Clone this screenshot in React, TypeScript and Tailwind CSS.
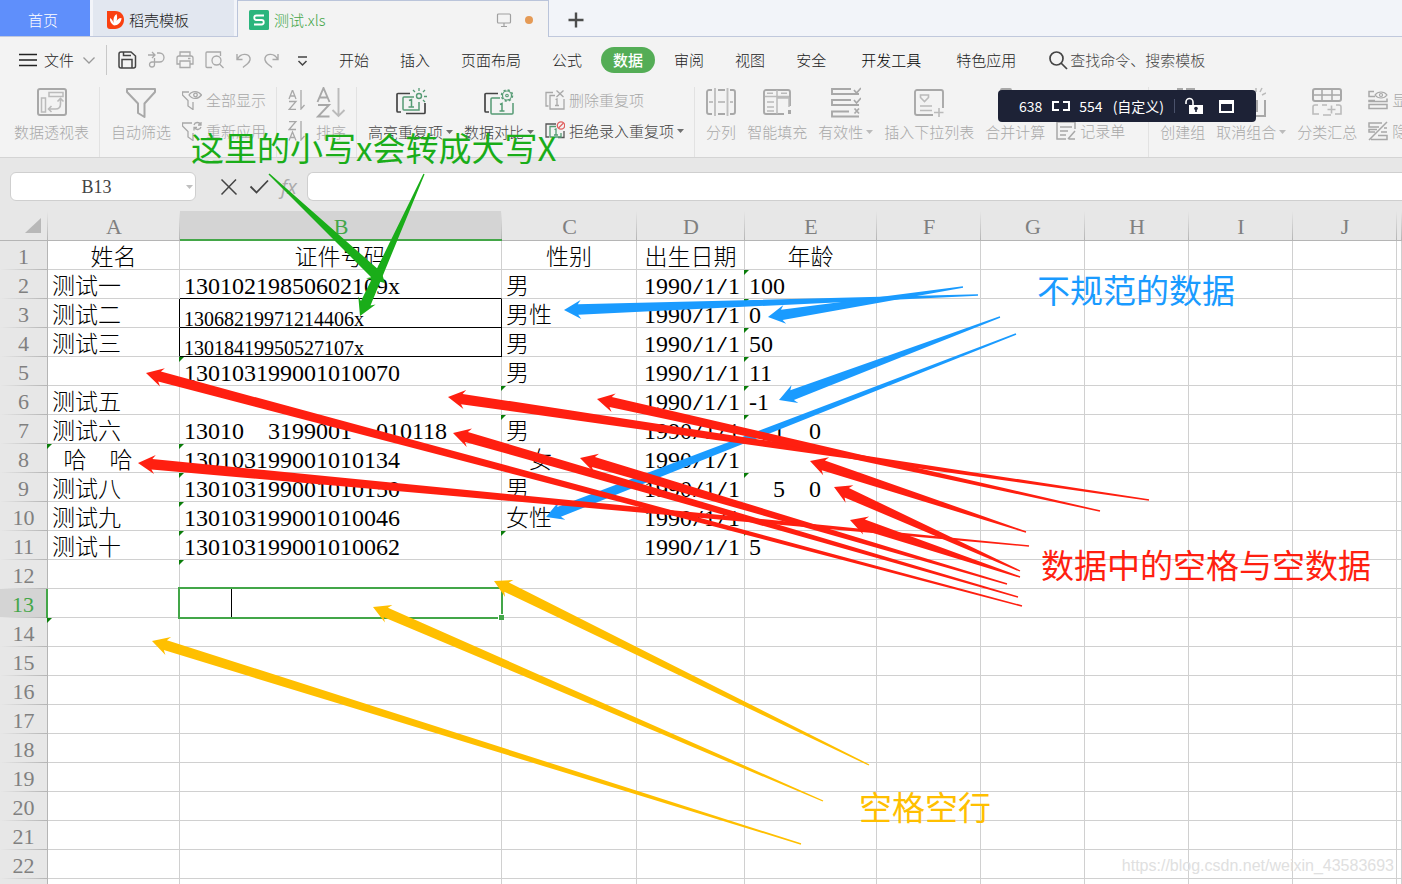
import type { ReactNode } from "react";

type Pt = [number, number];

const COLUMNS = [
  { name: "A", width: "w-[132px]" },
  { name: "B", width: "w-[322px]" },
  { name: "C", width: "w-[135px]" },
  { name: "D", width: "w-[108px]" },
  { name: "E", width: "w-[132px]" },
  { name: "F", width: "w-[104px]" },
  { name: "G", width: "w-[104px]" },
  { name: "H", width: "w-[104px]" },
  { name: "I", width: "w-[104px]" },
  { name: "J", width: "w-[104px]" },
  { name: "", width: "" },
];

/* \u2002 is an en space: half an em, the same width as one digit. */
const CELLS: Record<string, string> = {
  A1: "姓名", B1: "证件号码", C1: "性别", D1: "出生日期", E1: "年龄",
  A2: "测试一", B2: "13010219850602109x", C2: "男", D2: "1990/1/1", E2: "100",
  A3: "测试二", B3: "13068219971214406x", C3: "男性", D3: "1990/1/1", E3: "0",
  A4: "测试三", B4: "13018419950527107x", C4: "男", D4: "1990/1/1", E4: "50",
  B5: "130103199001010070", C5: "男", D5: "1990/1/1", E5: "11",
  A6: "测试五", D6: "1990/1/1", E6: "-1",
  A7: "测试六", B7: "13010\u2002\u20023199001\u2002\u2002010118", C7: "男", D7: "1990/1/1", E7: "\u2002\u20021\u2002\u20020",
  A8: "\u2002哈\u2002\u2002哈", B8: "130103199001010134", C8: "\u2002\u2002女", D8: "1990/1/1",
  A9: "测试八", B9: "130103199001010150", C9: "男", D9: "1990/1/1", E9: "\u2002\u20025\u2002\u20020",
  A10: "测试九", B10: "130103199001010046", C10: "女性", D10: "1990/1/1",
  A11: "测试十", B11: "130103199001010062", D11: "1990/1/1", E11: "5",
};

const FLAGGED = new Set([
  "A8", "A14", "B5", "B8", "B9", "B10", "B11", "B12", "C6", "C7", "C11",
  "E2", "E3", "E4", "E5", "E6", "E7", "E9", "E11",
]);
const BLACK_RIGHT = new Set(["A3", "A4", "B3", "B4"]);
const BLACK_BOTTOM = new Set(["B2", "B3", "B4"]);

const ARROWS: { color: string; from: Pt; to: Pt }[] = [
  { color: "#1aad19", from: [269, 174], to: [385, 283] },
  { color: "#1aad19", from: [424, 174], to: [360, 316] },
  { color: "#1a9bff", from: [978, 295], to: [564, 310] },
  { color: "#1a9bff", from: [963, 287], to: [768, 317] },
  { color: "#1a9bff", from: [1000, 317], to: [779, 400] },
  { color: "#1a9bff", from: [1016, 334], to: [546, 517] },
  { color: "#ff1f10", from: [1149, 500], to: [448, 397] },
  { color: "#ff1f10", from: [1100, 511], to: [597, 399] },
  { color: "#ff1f10", from: [1022, 606], to: [146, 373] },
  { color: "#ff1f10", from: [1018, 597], to: [453, 433] },
  { color: "#ff1f10", from: [1007, 584], to: [580, 458] },
  { color: "#ff1f10", from: [1029, 546], to: [138, 463] },
  { color: "#ff1f10", from: [1026, 532], to: [810, 461] },
  { color: "#ff1f10", from: [1020, 571], to: [834, 487] },
  { color: "#ff1f10", from: [1020, 577], to: [850, 520] },
  { color: "#ffbf00", from: [869, 765], to: [494, 581] },
  { color: "#ffbf00", from: [823, 801], to: [373, 607] },
  { color: "#ffbf00", from: [801, 844], to: [152, 641] },
];

/* A tapering arrow: barbed head at `to`, thin tail at `from`. */
function arrowPoints(from: Pt, to: Pt): string {
  const dx = from[0] - to[0];
  const dy = from[1] - to[1];
  const len = Math.hypot(dx, dy);
  const ux = dx / len;
  const uy = dy / len;
  const shape: Pt[] = [[0, 0], [17, -9.5], [14, -5.2], [len, -0.7], [len, 0.7], [14, 5.2], [17, 9.5]];
  return shape
    .map(([d, n]) => `${(to[0] + d * ux - n * uy).toFixed(1)},${(to[1] + d * uy + n * ux).toFixed(1)}`)
    .join(" ");
}

function Icon({ w = 20, h = 20, sw = 1.5, children }: { w?: number; h?: number; sw?: number; children: ReactNode }) {
  return (
    <svg width={w} height={h} viewBox={`0 0 ${w} ${h}`} fill="none" stroke="currentColor" strokeWidth={sw} className="shrink-0" aria-hidden="true">
      {children}
    </svg>
  );
}

function Caret() {
  return (
    <svg width="7" height="4" viewBox="0 0 7 4" className="shrink-0" aria-hidden="true">
      <path d="M0 0h7L3.500 4z" fill="currentColor" opacity="0.75" />
    </svg>
  );
}

function Tool({ label, icon, caret, active }: { label: string; icon: ReactNode; caret?: boolean; active?: boolean }) {
  return (
    <button className={`flex shrink-0 flex-col items-center gap-1 ${active ? "text-[#444]" : "text-[#a8a8a8]"}`}>
      <span className="flex h-[31px] items-center text-[#a8a8a8]">{icon}</span>
      <span className="flex items-center gap-[3px] leading-5 whitespace-nowrap">
        {label}
        {caret && <Caret />}
      </span>
    </button>
  );
}

function SmallTool({ label, icon, caret, active }: { label: string; icon: ReactNode; caret?: boolean; active?: boolean }) {
  return (
    <button className={`flex h-5 items-center gap-1 leading-5 whitespace-nowrap ${active ? "text-[#444]" : "text-[#a8a8a8]"}`}>
      {icon}
      <span className="flex items-center gap-[3px]">
        {label}
        {caret && <Caret />}
      </span>
    </button>
  );
}

function Stack({ children }: { children: ReactNode }) {
  return <div className="flex shrink-0 flex-col gap-[11px] pt-[3px]">{children}</div>;
}

function Divider() {
  return <div className="-ml-px h-[72px] w-px shrink-0 bg-[#e2e2e2]" />;
}

function TabBar() {
  return (
    <div className="flex h-[37px] bg-[#f2f4f9] text-[15px]">
      <button className="h-[37px] w-[90px] border-b border-[#c0c8dc] bg-[#5f8ffb] pt-1 pr-1 text-white">首页</button>
      <div className="w-[3px] border-b border-[#c0c8dc]" />
      <button className="flex h-[37px] w-[141px] items-center gap-1 border-b border-[#c0c8dc] bg-[#e2e7f0] pt-1 pl-3.5 text-[#222]">
        <Icon w={18}>
          <path d="M0 1h8c6 0 9 4 9 9s-4 9-9 9H3c-2 0-3-1-3-3z" fill="#fa4010" stroke="none" />
          <path d="M7 15.500C4 13.500 2.500 11 3 8c2 1 3 3 3.500 5C6 9 7 5.500 9.500 4c1.300 3 .500 7-1 9 1-3 3-5 6-5 0 4-3.500 7.500-7.500 7.500z" fill="#fff" stroke="none" />
        </Icon>
        稻壳模板
      </button>
      <div className="w-[3px] border-b border-[#c0c8dc]" />
      <div className="flex w-[312px] items-center border border-b-0 border-[#bac4da] bg-[#f3f3f3] pt-0.5 pr-3 pl-[11px]">
        <button className="flex flex-1 items-center gap-[5px] font-normal text-[#43a648]">
          <Icon w={20} sw={1.8}>
            <rect width="20" height="20" rx="1.500" fill="#2bb57d" stroke="none" />
            <path d="M15 5.500H7.500a2 2 0 0 0 0 4.500h5a2 2 0 0 1 0 4.500H5" stroke="#fff" />
          </Icon>
          <span className="font-light">测试.xls</span>
        </button>
        <span className="mr-2.5">
          <Icon w={16} h={16} sw={1.2}>
            <g stroke="#a0a0a0">
              <rect x="1.500" y="2" width="13" height="9" rx="1" />
              <path d="M8 11v3M5 14.500h6" />
            </g>
          </Icon>
        </span>
        <span className="mx-[3px] size-2 rounded-full bg-[#e59a55]" />
      </div>
      <div className="flex flex-1 items-center border-b border-[#c0c8dc] pt-[3px] pl-[19px]">
        <button aria-label="新建" className="text-[#4d4d4d]">
          <Icon w={16} h={16} sw={2.4}>
            <path d="M8 .500v15M.500 8h15" />
          </Icon>
        </button>
      </div>
    </div>
  );
}

function QuickIcons() {
  return (
    <div className="ml-2.5 flex items-center gap-[9px] text-[#a9a9a9]">
      <button aria-label="保存" className="text-[#444]">
        <Icon>
          <path d="M2 4a2 2 0 0 1 2-2h10l4.500 4v10a2 2 0 0 1-2 2H4a2 2 0 0 1-2-2zM5 18V9.500h10V18M6.500 2v3.500H14" />
        </Icon>
      </button>
      <button aria-label="输出">
        <Icon sw={1.3}>
          <path d="M2 5h7M6 2l3 3-3 3M11 3h2.500a4.500 4.500 0 0 1 0 9H6M6 12a2.500 2.500 0 1 0 2.500 2.500V8" />
        </Icon>
      </button>
      <button aria-label="打印">
        <Icon sw={1.3}>
          <path d="M5 6V2h10v4M5 14H2V8a2 2 0 0 1 2-2h12a2 2 0 0 1 2 2v6h-3M5 11h10v6.500H5zM13 8.500h2.500" />
        </Icon>
      </button>
      <button aria-label="打印预览">
        <Icon sw={1.3}>
          <path d="M8 17.500H3a1 1 0 0 1-1-1V3a1 1 0 0 1 1-1h13.500v4M15.500 14l4 4" />
          <circle cx="12.500" cy="10.500" r="4.500" />
        </Icon>
      </button>
      <button aria-label="撤销">
        <Icon sw={1.4}>
          <path d="M4 4v5.500h5.500M4.500 9c3-6 11-6 12.500-1 1 4-3 6-7 9.500" />
        </Icon>
      </button>
      <button aria-label="恢复">
        <Icon sw={1.4}>
          <path d="M16 4v5.500h-5.500M15.500 9C12.500 3 4.500 3 3 8c-1 4 3 6 7 9.500" />
        </Icon>
      </button>
      <button aria-label="更多" className="text-[#444]">
        <Icon sw={1.5}>
          <path d="M7 7h9M7.500 11l4 4 4-4" />
        </Icon>
      </button>
    </div>
  );
}

function MenuRow() {
  return (
    <div className="flex h-[46px] items-center bg-[#f3f3f3] text-[15px] leading-[26px] whitespace-nowrap text-[#222]">
      <button className="flex items-center pl-[18px]">
        <Icon sw={1.4}>
          <path d="M1 4.500h18M1 10h18M1 15.500h18" />
        </Icon>
        <span className="mr-2 ml-1.5">文件</span>
        <span className="text-[#999]">
          <Icon w={14} h={14} sw={1.3}>
            <path d="M1.500 4.500L7 10l5.500-5.500" />
          </Icon>
        </span>
      </button>
      <div className="ml-2.5 h-[30px] w-px bg-[#c8c8c8]" />
      <QuickIcons />
      <nav className="ml-7 flex items-center gap-[31px]">
        <button>开始</button>
        <button>插入</button>
        <button>页面布局</button>
        <button>公式</button>
        <button className="-mx-3 rounded-full bg-[#54ad56] px-3 font-medium text-white">数据</button>
        <button>审阅</button>
        <button>视图</button>
        <button>安全</button>
        <button className="mx-1 text-black">开发工具</button>
        <button>特色应用</button>
      </nav>
      <button className="ml-8 flex items-center gap-px text-[#444]">
        <Icon w={21} sw={1.7}>
          <circle cx="8.500" cy="8.500" r="6.500" />
          <path d="M13 13l6 6" />
        </Icon>
        查找命令、搜索模板
      </button>
    </div>
  );
}

function Ribbon() {
  return (
    <div className="flex h-[75px] items-start gap-[11px] overflow-hidden border-b border-[#d4d4d4] bg-[#f3f3f3] pt-1 pl-3.5 text-[15px] text-[#a8a8a8]">
      <Tool
        label="数据透视表"
        icon={
          <Icon w={30} h={31} sw={2}>
            <rect x="1" y="2" width="28" height="26" rx="2" />
            <g strokeWidth="1.500" stroke="#bbb">
              <rect x="12" y="5.500" width="14" height="4" />
              <rect x="4.500" y="11" width="4" height="14" />
              <path d="M23.500 12v5c0 3-1 5-5 5h-7M20.500 14.500l3-3 3 3M14.500 19l-3 3 3 3" strokeWidth="1.600" />
            </g>
          </Icon>
        }
      />
      <Divider />
      <Tool
        label="自动筛选"
        icon={
          <Icon w={30} h={31} sw={2}>
            <path d="M1 2h28v3L18.500 16.500V30L12 26v-9.500L1 5z" strokeLinejoin="round" />
          </Icon>
        }
      />
      <Stack>
        <SmallTool
          label="全部显示"
          icon={
            <Icon sw={1.3}>
              <path d="M7 2H.500v3L6 10.500V16l5 3.500V12" />
              <path d="M7 5c3-4.500 9-4.500 12.500 0-3.500 4.500-9.500 4.500-12.500 0z" />
              <circle cx="13.500" cy="5" r="1.800" />
            </Icon>
          }
        />
        <SmallTool
          label="重新应用"
          icon={
            <Icon sw={1.3}>
              <path d="M10 2H.500v3L6 10.500V16l5 3.500V12" />
              <path d="M12 4c1-3 5-3.500 6.500-.500M19 1v3h-3M19 6c-1 3-5 3.500-6.500.500M12 9.500v-3h3" />
            </Icon>
          }
        />
      </Stack>
      <Divider />
      <Stack>
        <button aria-label="升序">
          <Icon w={17} sw={1.3}>
            <path d="M1 9L4.500 0 8 9M2 6h5M1 11.500h7L1 19.500h7M13 0v19l3.500-4" />
          </Icon>
        </button>
        <button aria-label="降序">
          <Icon w={17} sw={1.3}>
            <path d="M1 .500h7L1 8.500h7M1 19.500L4.500 11 8 19.500M2 16.500h5M13 0v19l3.500-4" />
          </Icon>
        </button>
      </Stack>
      <Tool
        label="排序"
        icon={
          <Icon w={30} h={31} sw={1.9}>
            <path d="M1.500 15L7.500 1l6 14M3.500 10.500h8M2 18h11L2 29.500h11.500" />
            <path d="M22.500 1v28M16.500 23l6 6 6-6" stroke="#bbb" />
          </Icon>
        }
      />
      <Divider />
      <Tool
        active
        caret
        label="高亮重复项"
        icon={
          <Icon w={32} h={31} sw={1.7}>
            <path d="M15 6.500H3a1 1 0 0 0-1 1V24a1 1 0 0 0 1 1h3M11 26.500h18a1 1 0 0 0 1-1V16" stroke="#444" />
            <g stroke="#559b74">
              <path d="M19 10H9a1 1 0 0 0-1 1v11a1 1 0 0 0 1 1h15V15M14 13.500l2.500-1V20M13.500 20h5.500" strokeWidth="1.500" />
              <circle cx="24" cy="9" r="2.500" strokeWidth="1.400" />
              <path d="M24 1v3M18 3l2 2M30 3l-2 2M29 9.500h3M28 13l2 2" strokeWidth="1.300" />
            </g>
          </Icon>
        }
      />
      <Tool
        active
        caret
        label="数据对比"
        icon={
          <Icon w={32} h={31} sw={1.7}>
            <path d="M15 6.500H3a1 1 0 0 0-1 1V24a1 1 0 0 0 1 1h3" stroke="#444" />
            <g stroke="#559b74">
              <path d="M17 11H9a1 1 0 0 0-1 1v14a1 1 0 0 0 1 1h20a1 1 0 0 0 1-1V16M17 17.500l2-1V24M16.500 24h5" strokeWidth="1.500" />
              <circle cx="24" cy="8.500" r="5.500" strokeDasharray="2.200 2.120" strokeWidth="1.500" />
              <circle cx="24" cy="8.500" r="4.500" strokeWidth="1.200" />
              <circle cx="24" cy="8.500" r="1.300" strokeWidth="1.100" />
            </g>
          </Icon>
        }
      />
      <Stack>
        <SmallTool
          label="删除重复项"
          icon={
            <Icon sw={1.3}>
              <path d="M8 2.500H1V16h2.500M10 5.500H5V19h14V9M10.500 9.500l1.500-.500v6M10 15.500h4M11.500.500l7 6.500M18.500.500l-7 6.500" />
            </Icon>
          }
        />
        <SmallTool
          active
          caret
          label="拒绝录入重复项"
          icon={
            <Icon sw={1.3}>
              <path d="M11 3H1v13h3" stroke="#555" />
              <path d="M13 16.500h6V10" stroke="#555" />
              <path d="M11 5.500H5V16h11v-4M9.500 8.500l1.500-.500v6M9 14h4" stroke="#559b74" />
              <circle cx="16" cy="4.500" r="3.700" stroke="#e06060" />
              <path d="M13.500 7l5-5" stroke="#e06060" />
            </Icon>
          }
        />
      </Stack>
      <Divider />
      <Tool
        label="分列"
        icon={
          <Icon w={30} h={31} sw={1.9}>
            <path d="M6 3H3a2 2 0 0 0-2 2v20a2 2 0 0 0 2 2h3M24 3h3a2 2 0 0 1 2 2v20a2 2 0 0 1-2 2h-3M12 3h7M12 27h7" />
            <path d="M9 1v28M21.500 1v28M3 15h4M12 15h7M24 15h3" stroke="#c0c0c0" />
          </Icon>
        }
      />
      <Tool
        label="智能填充"
        icon={
          <Icon w={28} h={31} sw={1.9}>
            <path d="M27 19V5a2 2 0 0 0-2-2H3a2 2 0 0 0-2 2v20a2 2 0 0 0 2 2h18" />
            <path d="M2 9.500h24M14 3v6M14 27V11h12v9M4 15h7M4 20h7M4 6.300h6M18 6.300h6M4 24h7" stroke="#bbb" strokeWidth="1.500" />
            <path d="M25 23h3v4h-3z" fill="currentColor" stroke="none" />
          </Icon>
        }
      />
      <Tool
        caret
        label="有效性"
        icon={
          <Icon w={30} h={31} sw={1.9}>
            <path d="M20 2H1v5h27M20 13H1v5h27M18 24.500H1v5h27" />
            <path d="M23 3l2.500 3L30 1M23 13l2.500 3L30 11M23.500 21.500l4.500 5M28 21.500l-4.500 5" strokeWidth="1.700" />
          </Icon>
        }
      />
      <Tool
        label="插入下拉列表"
        icon={
          <Icon w={30} h={31} sw={1.9}>
            <path d="M29 21V5a2 2 0 0 0-2-2H3a2 2 0 0 0-2 2v21a2 2 0 0 0 2 2h16" />
            <path d="M6.500 8h8v2.500l-4 4-4-4zM6 19h12M6 23.500h12M25 21v9M20 25.500h9.500" stroke="#bbb" strokeWidth="1.600" />
          </Icon>
        }
      />
      <Tool
        label="合并计算"
        icon={
          <Icon w={30} h={31} sw={1.9}>
            <rect x="1" y="2" width="10" height="12" rx="1" />
            <rect x="1" y="17" width="28" height="12" rx="1" />
          </Icon>
        }
      />
      <Stack>
        <div className="h-5" />
        <SmallTool
          label="记录单"
          icon={
            <Icon sw={1.5}>
              <path d="M19 8V1H1v17h9M4 6h12M4 10h8M4 14h6M12 18l7-8M13 18h6" />
            </Icon>
          }
        />
      </Stack>
      <div className="w-0.5 shrink-0" />
      <Divider />
      <Tool
        label="创建组"
        icon={
          <Icon w={30} h={31} sw={2}>
            <path d="M9 2h6M18 2h8v10M3 8v20h24V15" />
          </Icon>
        }
      />
      <Tool
        caret
        label="取消组合"
        icon={
          <Icon w={30} h={31} sw={2}>
            <path d="M1 9v20h28V13M8 14h13v10H8z" />
            <path d="M20 1v4M26 1l-2 4M30 6l-4 2" stroke="#bbb" strokeWidth="1.500" />
          </Icon>
        }
      />
      <Tool
        label="分类汇总"
        icon={
          <Icon w={30} h={31} sw={2}>
            <rect x="1" y="2" width="28" height="12" rx="2" />
            <path d="M1 8h28M10 2v12M20 2v12" strokeWidth="1.500" />
            <path d="M6 18H3a2 2 0 0 0-2 2v7h6M24 18h3a2 2 0 0 1 2 2v7h-6M10 18h5M11 28h8M19.500 18.500v8M15.500 22.500h8" stroke="#bbb" strokeWidth="1.600" />
          </Icon>
        }
      />
      <Stack>
        <SmallTool
          label="显示明细"
          icon={
            <Icon sw={1.5}>
              <path d="M6 1.500H1v5h6M7 10.500H1v1h18v-3M1 14.500h18v4H1z" />
              <path d="M7 5c3-4 9-4 12 0-3 4-9 4-12 0z" strokeWidth="1.200" />
              <circle cx="13" cy="5" r="1.500" strokeWidth="1.200" />
            </Icon>
          }
        />
        <SmallTool
          label="隐藏明细"
          icon={
            <Icon sw={1.5}>
              <path d="M14 2H1v4h10M9 8.500H1V11h6M13 11h6M10 14.500h9v4H3M19 1L1 19M16 7h3" />
            </Icon>
          }
        />
      </Stack>
    </div>
  );
}

function FormulaBar() {
  return (
    <div className="flex h-[53px] items-start bg-[#e7e7e7] pt-3.5 pl-2.5">
      <div className="flex h-[29px] w-[186px] items-center rounded-md border border-[#cfcfcf] bg-white pr-0.5 text-[#aaa]">
        <input
          aria-label="名称框"
          defaultValue="B13"
          className="min-w-0 flex-1 pt-0.5 pr-2 pl-1 text-center font-['Liberation_Serif',serif] text-[18px] text-[#444] outline-none"
        />
        <Caret />
      </div>
      <div className="flex h-[29px] items-center pl-[23px] text-[#444]">
        <button aria-label="取消">
          <Icon sw={1.5}>
            <path d="M2.500 2.500l15 15M17 2.500L2.500 17.500" />
          </Icon>
        </button>
        <button aria-label="输入" className="ml-2.5">
          <Icon sw={1.8}>
            <path d="M1.500 9.500l6 6L19 3.500" />
          </Icon>
        </button>
        <button className="ml-2.5 w-5 font-['Open_Sans',sans-serif] text-[20px] leading-6 font-normal text-[#aaa] italic">fx</button>
      </div>
      <input
        aria-label="编辑栏"
        className="ml-2 h-[29px] min-w-0 flex-1 rounded-l-md border border-r-0 border-[#cfcfcf] bg-white px-2 outline-none"
      />
    </div>
  );
}

function CellText({ id, text }: { id: string; text: string }) {
  if (id.startsWith("D") && text.includes("/")) {
    return (
      <>
        {text.split("/").map((part, i) => (
          <span key={i}>
            {i > 0 && <span className="font-['Liberation_Mono',monospace] text-[20px] leading-4">/</span>}
            {part}
          </span>
        ))}
      </>
    );
  }
  return <>{text}</>;
}

function Cell({ col, row }: { col: string; row: number }) {
  const id = `${col}${row}`;
  const text = CELLS[id] ?? "";
  const cjk = /[\u4e00-\u9fff]/.test(text);
  const small = id === "B3" || id === "B4";
  const align = row === 1 ? "text-center" : col === "D" ? "text-right" : "text-left";
  const size = small ? "text-[20px] leading-4" : cjk ? "text-[23px] leading-[22px]" : "text-[24px] leading-6";
  return (
    <td
      className={`relative h-[29px] border-r border-b px-1 align-bottom whitespace-pre ${align} ${size} ${
        BLACK_RIGHT.has(id) ? "border-r-black" : "border-r-[#d0d0d0]"
      } ${BLACK_BOTTOM.has(id) ? "border-b-black" : "border-b-[#d0d0d0]"}`}
    >
      <CellText id={id} text={text} />
      {FLAGGED.has(id) && (
        <svg width="5" height="5" className="absolute top-0 -left-px" aria-hidden="true">
          <path d="M0 0h5L0 5z" fill="#0a7d0a" />
        </svg>
      )}
      {id === "B13" && (
        <div className="absolute -inset-0.5 z-10 border-2 border-[#43a648] pl-[51px]">
          <div className="h-full w-px bg-black" />
          <div className="absolute -right-[3px] -bottom-[3px] size-[6px] border-t border-l border-white bg-[#43a648]" />
        </div>
      )}
    </td>
  );
}

function Sheet() {
  return (
    <table className="w-full table-fixed border-separate border-spacing-0 bg-white font-['Liberation_Serif','Noto_Sans_CJK_SC',serif] text-black">
      <colgroup>
        <col className="w-[48px]" />
        {COLUMNS.map((c, i) => (
          <col key={i} className={c.width} />
        ))}
      </colgroup>
      <thead>
        <tr className="bg-[#e7e7e7] text-[22px] leading-[26px] text-[#808080]">
          <th className="h-[30px] border-b border-[#b5b5b5] bg-[linear-gradient(to_top,#b5b5b5,#e7e7e7)] bg-[length:1px_100%] bg-right bg-no-repeat">
            <svg width="16" height="16" className="ml-[25px]" aria-hidden="true">
              <path d="M16 0v15H0z" fill="#b8b8b8" />
            </svg>
          </th>
          {COLUMNS.map((c, i) => (
            <th
              key={i}
              className={`h-[30px] bg-[linear-gradient(to_top,#b5b5b5,#e7e7e7)] bg-[length:1px_100%] bg-right bg-no-repeat p-0 align-bottom font-normal ${
                c.name === "B" ? "border-b-2 border-[#43a648] bg-[#d4d4d4] leading-6 text-[#43a648]" : "border-b border-[#b5b5b5]"
              }`}
            >
              {c.name}
            </th>
          ))}
        </tr>
      </thead>
      <tbody>
        {Array.from({ length: 23 }, (_, i) => i + 1).map((row) => (
          <tr key={row}>
            <th
              className={`h-[29px] bg-[linear-gradient(to_right,#e7e7e7,#b5b5b5)] bg-[length:100%_1px] bg-bottom bg-no-repeat p-0 align-bottom text-[22px] leading-[26px] font-normal ${
                row === 13
                  ? "border-r-2 border-[#43a648] bg-[#d4d4d4] text-[#43a648]"
                  : "border-r border-[#b5b5b5] bg-[#e7e7e7] text-[#808080]"
              }`}
            >
              {row}
            </th>
            {COLUMNS.map((c, i) => (
              <Cell key={i} col={c.name} row={row} />
            ))}
          </tr>
        ))}
      </tbody>
    </table>
  );
}

function CaptureBar() {
  return (
    <div className="absolute top-[90px] left-[998px] flex h-8 w-[258px] items-center rounded bg-[#1d2236] pl-[21px] text-[14px] font-normal whitespace-nowrap text-white">
      <span>638</span>
      <span className="mr-[9px] ml-2.5">
        <Icon w={18} h={12} sw={2}>
          <path d="M7 2H1v8h6M11 2h6v8h-6" />
        </Icon>
      </span>
      <span>554</span>
      <span className="ml-2.5">(自定义)</span>
      <span className="ml-2.5 h-3.5 w-px bg-[#4b526b]" />
      <button aria-label="解锁" className="ml-2.5">
        <Icon w={18} h={18} sw={1.6}>
          <path d="M1 7V5a3.500 3.500 0 0 1 7 0v4" />
          <path d="M4 8h14v9H4z" fill="#fff" stroke="none" />
          <circle cx="11" cy="11.500" r="1.800" fill="#1d2236" stroke="none" />
          <path d="M11 12v3" stroke="#1d2236" />
        </Icon>
      </button>
      <button aria-label="窗口" className="ml-4">
        <Icon w={15} h={13} sw={2}>
          <path d="M1 1h13v11H1z" />
          <path d="M1 2.500h13" strokeWidth="3" />
        </Icon>
      </button>
    </div>
  );
}

function Annotations() {
  return (
    <div className="pointer-events-none absolute inset-0 z-20 text-[33px] leading-10 font-normal whitespace-nowrap">
      <svg className="absolute inset-0 h-full w-full" aria-hidden="true">
        {ARROWS.map((a, i) => (
          <polygon key={i} points={arrowPoints(a.from, a.to)} fill={a.color} />
        ))}
      </svg>
      <p className="absolute top-[127px] left-[191px] text-[#1aad19]">这里的小写x会转成大写X</p>
      <p className="absolute top-[269px] left-[1037px] text-[#1a9bff]">不规范的数据</p>
      <p className="absolute top-[544px] left-[1041px] text-[#ff1f10]">数据中的空格与空数据</p>
      <p className="absolute top-[786px] left-[859px] text-[#ffbf00]">空格空行</p>
      <p className="absolute right-2 bottom-1.5 font-['Liberation_Sans',sans-serif] text-[16px] leading-6 text-[#e0e0e0]">
        https://blog.csdn.net/weixin_43583693
      </p>
    </div>
  );
}

export default function App() {
  return (
    <div className="relative h-screen overflow-hidden bg-white font-['Noto_Sans_CJK_SC',sans-serif] font-light">
      <TabBar />
      <MenuRow />
      <Ribbon />
      <FormulaBar />
      <Sheet />
      <CaptureBar />
      <Annotations />
    </div>
  );
}
